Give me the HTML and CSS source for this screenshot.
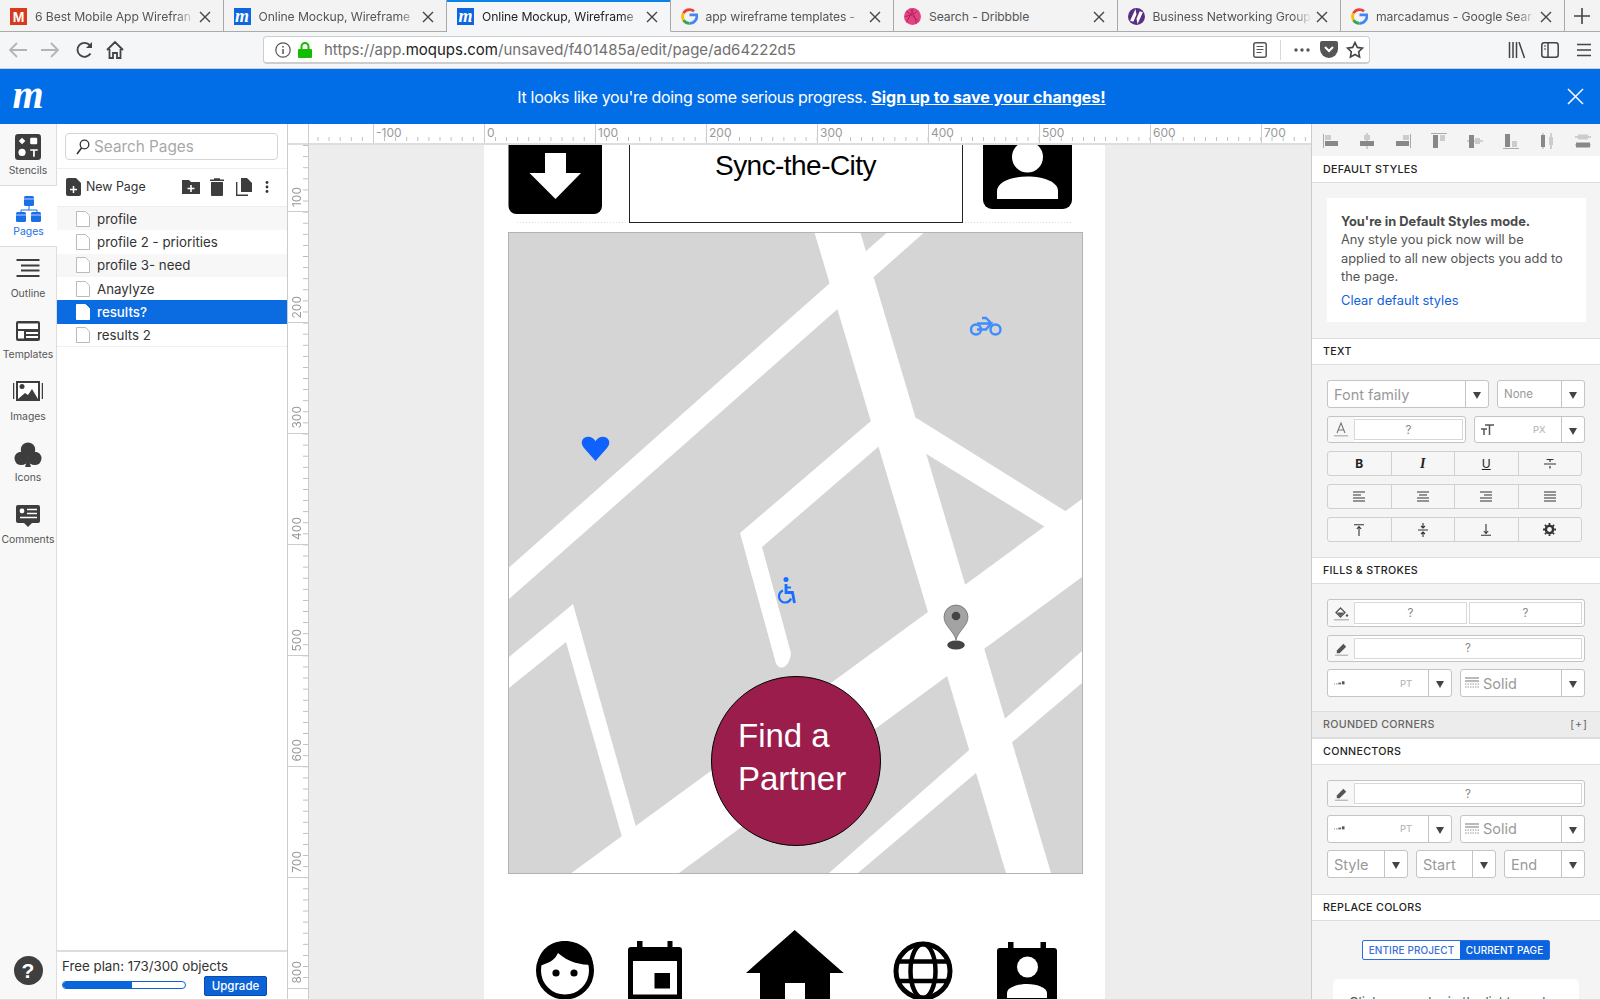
FILE: index.html
```html
<!DOCTYPE html>
<html lang="en">
<head>
<meta charset="utf-8">
<title>Moqups</title>
<link rel="stylesheet" href="styles.css">
</head>
<body>
<svg class="defs" width="0" height="0" aria-hidden="true">
  <symbol id="x" viewBox="0 0 12 12"><path d="M1 1l10 10M11 1L1 11" stroke="#444" stroke-width="1.4" fill="none"/></symbol>
  <symbol id="g" viewBox="0 0 16 16"><path d="M8 6.5h7c.4 3.9-2.2 8-7 8" fill="none" stroke="#4285f4" stroke-width="2.6"/><path d="M8 14.5c-2.6 0-4.6-1.3-5.7-3.2" fill="none" stroke="#34a853" stroke-width="2.6"/><path d="M2.3 11.3C1.300 9.400 1.300 6.800 2.300 4.900" fill="none" stroke="#fbbc05" stroke-width="2.600"/><path d="M2.300 4.900C3.400 2.900 5.500 1.500 8 1.500c1.700 0 3.100.6 4.300 1.600" fill="none" stroke="#ea4335" stroke-width="2.600"/></symbol>
  <symbol id="pencil" viewBox="0 0 16 16"><path d="M3 10l7-7 3 3-7 7H3z" fill="#555"/><rect x="1" y="14.500" width="14" height="1.500" fill="#bbb"/></symbol>
  <symbol id="weight" viewBox="0 0 16 8"><rect x="0" y="4" width="1" height="1" fill="#666"/><rect x="2.500" y="4" width="1.500" height="1" fill="#666"/><rect x="5" y="3" width="3" height="2" fill="#666"/><rect x="9" y="1.500" width="3" height="3.500" fill="#555"/></symbol>
  <symbol id="lines" viewBox="0 0 14 12"><path d="M0 1h14M0 4h14" stroke="#777" stroke-width="1.200"/><path d="M0 7h14M0 10h14" stroke="#999" stroke-width="1" stroke-dasharray="1.500 1"/></symbol>
  <symbol id="file" viewBox="0 0 14 16"><path d="M.5.500h9l4 4v11H.5z" fill="#fff" stroke="#bbb"/></symbol>
</svg>

<div class="app">
  <div class="tabs">
    <div class="tab"><span class="fav fav-gm">M</span><span class="tab-title">6 Best Mobile App Wirefran</span><svg class="tab-x"><use href="#x"/></svg></div>
    <div class="tab"><span class="fav fav-mq">m</span><span class="tab-title">Online Mockup, Wireframe</span><svg class="tab-x"><use href="#x"/></svg></div>
    <div class="tab tab-active"><span class="fav fav-mq">m</span><span class="tab-title">Online Mockup, Wireframe</span><svg class="tab-x"><use href="#x"/></svg></div>
    <div class="tab"><svg class="fav"><use href="#g"/></svg><span class="tab-title">app wireframe templates -</span><svg class="tab-x"><use href="#x"/></svg></div>
    <div class="tab"><svg class="fav" viewBox="0 0 16 16"><circle cx="8" cy="8" r="8" fill="#e3447f"/><path d="M2 3c4 3 9 6 12 10M9 .5C7 5 4 10 2.500 13.500M1 8c5-1 10-3 12-5.500M6 .5c3 4 5 10 5.500 14.500" stroke="#a82358" stroke-width=".8" fill="none"/></svg><span class="tab-title tab-title-full">Search - Dribbble</span><svg class="tab-x"><use href="#x"/></svg></div>
    <div class="tab"><svg class="fav" viewBox="0 0 16 16"><circle cx="8" cy="8" r="8" fill="#5c2d84"/><path d="M7 1L2 12l3 1 3-7zM9 15l5-11-3-1-3 7z" fill="#fff"/></svg><span class="tab-title">Business Networking Group</span><svg class="tab-x"><use href="#x"/></svg></div>
    <div class="tab"><svg class="fav"><use href="#g"/></svg><span class="tab-title">marcadamus - Google Sear</span><svg class="tab-x"><use href="#x"/></svg></div>
    <div class="tab-plus"><svg width="16" height="16" viewBox="0 0 16 16"><path d="M8 0v16M0 8h16" stroke="#444" stroke-width="1.600"/></svg></div>
  </div>

  <div class="toolbar">
    <svg class="tb tb-back" width="20" height="18" viewBox="0 0 20 18"><path d="M19 9H2M9 2L2 9l7 7" fill="none" stroke="#b4b4b4" stroke-width="1.800"/></svg>
    <svg class="tb tb-fwd" width="20" height="18" viewBox="0 0 20 18"><path d="M1 9h17M11 2l7 7-7 7" fill="none" stroke="#b4b4b4" stroke-width="1.800"/></svg>
    <svg class="tb tb-reload" width="18" height="18" viewBox="0 0 18 18"><path d="M14.500 12.500A7 7 0 1 1 14 4.500" fill="none" stroke="#444" stroke-width="1.900"/><path d="M16 1v6h-6z" fill="#444"/></svg>
    <svg class="tb tb-home" width="18" height="18" viewBox="0 0 18 18"><path d="M1 9l8-8 8 8M3.500 8v9h3.500v-5h4v5h3.500V8" fill="none" stroke="#444" stroke-width="1.800"/></svg>
    <div class="url">
      <svg width="16" height="16" viewBox="0 0 16 16"><circle cx="8" cy="8" r="7.200" fill="none" stroke="#555" stroke-width="1.200"/><rect x="7.300" y="7" width="1.500" height="5" fill="#555"/><rect x="7.300" y="4" width="1.500" height="1.600" fill="#555"/></svg>
      <svg class="url-lock" width="14" height="16" viewBox="0 0 14 16"><path d="M3.500 7V4.500a3.500 3.500 0 0 1 7 0V7" fill="none" stroke="#12bc00" stroke-width="2"/><rect y="7" width="14" height="9" rx="1" fill="#12bc00"/></svg>
      <span class="url-text">https://app.<b>moqups.com</b>/unsaved/f401485a/edit/page/ad64222d5</span>
      <svg class="url-reader" width="14" height="16" viewBox="0 0 14 16"><rect x=".8" y=".8" width="12.400" height="14.400" rx="2" fill="none" stroke="#555" stroke-width="1.500"/><path d="M3.500 4.500h7M3.500 7.500h7M3.500 10.500h5" stroke="#555" stroke-width="1.200"/></svg>
      <span class="url-sep"></span>
      <svg width="16" height="4" viewBox="0 0 16 4"><circle cx="2" cy="2" r="1.700" fill="#555"/><circle cx="8" cy="2" r="1.700" fill="#555"/><circle cx="14" cy="2" r="1.700" fill="#555"/></svg>
      <svg class="url-pocket" width="18" height="17" viewBox="0 0 18 17"><path d="M2 0h14a2 2 0 0 1 2 2v6a9 9 0 0 1-18 0V2a2 2 0 0 1 2-2z" fill="#555"/><path d="M5 6l4 4 4-4" fill="none" stroke="#fff" stroke-width="2"/></svg>
      <svg class="url-star" width="18" height="18" viewBox="0 0 18 18"><path d="M9 1.500l2.300 4.900 5.200.7-3.800 3.700.9 5.300L9 13.500l-4.600 2.600.9-5.300L1.500 7.100l5.200-.7z" fill="none" stroke="#444" stroke-width="1.600"/></svg>
    </div>
    <svg class="tb tb-lib" width="18" height="16" viewBox="0 0 18 16"><path d="M1.500 0v16M5 0v16M8.500 0v16M11 0l5.500 16" stroke="#444" stroke-width="1.500" fill="none"/></svg>
    <svg class="tb tb-side" width="18" height="16" viewBox="0 0 18 16"><rect x=".8" y=".8" width="16.400" height="14.400" rx="2.500" fill="none" stroke="#444" stroke-width="1.500"/><path d="M7 1v14" stroke="#444" stroke-width="1.500"/><path d="M3 4h2M3 7h2" stroke="#444"/></svg>
    <svg class="tb tb-menu" width="14" height="14" viewBox="0 0 14 14"><path d="M0 1.500h14M0 7h14M0 12.500h14" stroke="#444" stroke-width="1.700"/></svg>
  </div>

  <div class="banner">
    <span class="banner-logo">m</span>
    <p class="banner-msg"><span class="banner-lead">It looks like you're doing some serious progress.</span> <a class="banner-link">Sign up to save your changes!</a></p>
    <svg class="banner-x" width="17" height="17" viewBox="0 0 17 17"><path d="M1 1l15 15M16 1L1 16" stroke="#fff" stroke-width="1.500"/></svg>
  </div>

  <div class="main">
    <nav class="rail">
      <div class="rail-item rail-first">
        <svg width="26" height="26" viewBox="0 0 24 24"><rect width="24" height="24" rx="3" fill="#3d3d3d"/><path d="M6.500 3.500l3 3-3 3-3-3z" fill="#fff"/><rect x="14" y="3.500" width="6.500" height="6" rx="1" fill="#fff"/><circle cx="6.500" cy="17" r="3.300" fill="#fff"/><path d="M14 14h7v1.500h-2.700V21h-1.600v-5.500H14z" fill="#fff"/></svg>
        <span>Stencils</span>
      </div>
      <div class="rail-item rail-active">
        <svg width="26" height="26" viewBox="0 0 26 26"><path d="M13 9v5M5 18v-4h16v4" fill="none" stroke="#1a6fe8"/><rect x="8" y="0" width="10" height="10" rx="1.500" fill="#1a6fe8"/><rect x="0" y="16" width="10" height="10" rx="1.500" fill="#1a6fe8"/><rect x="15" y="16" width="10" height="10" rx="1.500" fill="#1a6fe8"/><path d="M8 3h10M0 19h10M15 19h10" stroke="#fff" stroke-width=".7"/></svg>
        <span>Pages</span>
      </div>
      <div class="rail-item">
        <svg width="26" height="26" viewBox="0 0 26 26"><path d="M1.500 3h23M6 8.500h18.500M6 13.500h18.500M1.500 19h23" stroke="#3d3d3d" stroke-width="2"/></svg>
        <span>Outline</span>
      </div>
      <div class="rail-item">
        <svg width="26" height="26" viewBox="0 0 26 26"><rect x="1" y="2" width="24" height="20" rx="2" fill="#3d3d3d"/><rect x="3" y="4.500" width="20" height="5.500" fill="#fff"/><rect x="3" y="12" width="6" height="7.500" fill="#fff"/><path d="M11 14h12M11 18h12" stroke="#fff" stroke-width="2"/></svg>
        <span>Templates</span>
      </div>
      <div class="rail-item">
        <svg width="30" height="26" viewBox="0 0 30 26"><rect x="3" y="1" width="24" height="20" fill="#3d3d3d"/><path d="M.5 3v16M29.500 3v16" stroke="#3d3d3d" stroke-width="1.500"/><rect x="5" y="3" width="20" height="16" fill="#fff"/><circle cx="9" cy="6.500" r="2.500" fill="#3d3d3d"/><path d="M5 19l7-6 3 2 4-6 6 10z" fill="#3d3d3d"/></svg>
        <span>Images</span>
      </div>
      <div class="rail-item">
        <svg width="28" height="26" viewBox="0 0 28 27"><circle cx="14" cy="8" r="7.500" fill="#3d3d3d"/><circle cx="7" cy="17" r="7" fill="#3d3d3d"/><circle cx="21" cy="17" r="7" fill="#3d3d3d"/><path d="M14 14l3 12h4H7h4z" fill="#3d3d3d"/></svg>
        <span>Icons</span>
      </div>
      <div class="rail-item">
        <svg width="26" height="26" viewBox="0 0 26 26"><path d="M3 1h20a2 2 0 0 1 2 2v14a2 2 0 0 1-2 2h-6l-4 4-4-4H3a2 2 0 0 1-2-2V3a2 2 0 0 1 2-2z" fill="#3d3d3d"/><circle cx="7" cy="7" r="2.400" fill="#fff"/><path d="M12 5.500h10M12 9.500h10M5 13.500h17" stroke="#fff" stroke-width="1.500"/></svg>
        <span>Comments</span>
      </div>
      <div class="rail-help">?</div>
    </nav>

    <aside class="pages">
      <div class="pages-search">
        <div class="search-box">
          <svg width="14" height="16" viewBox="0 0 14 16"><circle cx="8.500" cy="5.500" r="4.300" fill="none" stroke="#333" stroke-width="1.300"/><path d="M5.500 9L1 15" stroke="#333" stroke-width="1.500"/></svg>
          <span>Search Pages</span>
        </div>
      </div>
      <div class="pages-actions">
        <svg width="15" height="18" viewBox="0 0 15 18"><path d="M2 0h8l5 5v11a2 2 0 0 1-2 2H2a2 2 0 0 1-2-2V2a2 2 0 0 1 2-2z" fill="#3d3d3d"/><path d="M7.500 8v7M4 11.500h7" stroke="#fff" stroke-width="1.500"/></svg>
        <span class="new-page">New Page</span>
        <svg class="act-folder" width="18" height="15" viewBox="0 0 18 15"><path d="M0 1h7l2 2h9v12H0z" fill="#3d3d3d"/><path d="M9 6v7M5.500 9.500h7" stroke="#fff" stroke-width="1.600"/></svg>
        <svg class="act-trash" width="14" height="18" viewBox="0 0 14 18"><path d="M1 4h12v13a1 1 0 0 1-1 1H2a1 1 0 0 1-1-1zM0 1.500h14V3H0zM4 .3h6v1.500H4z" fill="#3d3d3d"/></svg>
        <svg class="act-copy" width="16" height="18" viewBox="0 0 16 18"><path d="M5 0h6l5 5v9H5z" fill="#3d3d3d"/><path d="M.7 4v13.300H12" fill="none" stroke="#3d3d3d" stroke-width="1.400"/></svg>
        <svg class="act-more" width="4" height="12" viewBox="0 0 4 12"><circle cx="2" cy="1.500" r="1.400" fill="#333"/><circle cx="2" cy="6" r="1.400" fill="#333"/><circle cx="2" cy="10.500" r="1.400" fill="#333"/></svg>
      </div>
      <ul class="page-list">
        <li class="page-row page-alt"><svg width="14" height="16"><use href="#file"/></svg>profile</li>
        <li class="page-row"><svg width="14" height="16"><use href="#file"/></svg>profile 2 - priorities</li>
        <li class="page-row page-alt"><svg width="14" height="16"><use href="#file"/></svg>profile 3- need</li>
        <li class="page-row"><svg width="14" height="16"><use href="#file"/></svg>Anaylyze</li>
        <li class="page-row page-sel"><svg width="14" height="16"><use href="#file"/></svg>results?</li>
        <li class="page-row page-last"><svg width="14" height="16"><use href="#file"/></svg>results 2</li>
      </ul>
      <div class="pages-foot">
        <div class="plan">Free plan: 173/300 objects</div>
        <div class="plan-row">
          <div class="plan-bar"><div class="plan-fill"></div></div>
          <button class="upgrade">Upgrade</button>
        </div>
      </div>
    </aside>

    <section class="work">
      <div class="ruler-corner"></div>
      <div class="ruler-h">
        <span class="rh-first"></span>
        <span class="rh">-100</span><span class="rh">0</span><span class="rh">100</span><span class="rh">200</span><span class="rh">300</span><span class="rh">400</span><span class="rh">500</span><span class="rh">600</span><span class="rh">700</span>
      </div>
      <div class="ruler-v">
        <div class="rv rv-first"><span>100</span></div>
        <div class="rv"><span>200</span></div>
        <div class="rv"><span>300</span></div>
        <div class="rv"><span>400</span></div>
        <div class="rv"><span>500</span></div>
        <div class="rv"><span>600</span></div>
        <div class="rv"><span>700</span></div>
        <div class="rv rv-last"><span>800</span></div>
      </div>
      <div class="canvas">
        <div class="sheet">
          <svg class="art" width="621" height="854" viewBox="484 145 621 854">
            <!-- header icons -->
            <path d="M508.500 140H602V206a8 8 0 0 1-8 8H516.500a8 8 0 0 1-8-8z"/>
            <path d="M545 153h21v20h15l-25.500 26L529.500 173H545z" fill="#fff"/>
            <path d="M983 140h89V200a9 9 0 0 1-9 9H992a9 9 0 0 1-9-9z"/>
            <circle cx="1027.500" cy="157" r="15.500" fill="#fff"/>
            <path d="M997 199v-8c0-9 14-14.500 30.500-14.500S1058 182 1058 191v8z" fill="#fff"/>
            <path d="M517 222.500H628M962 222.500h110" stroke="#ddd" stroke-dasharray="1 2"/>
            <!-- map -->
            <rect x="508.500" y="232.500" width="574" height="641" fill="#d5d5d5" stroke="#b3b3b3"/>
            <g fill="#fff">
              <path d="M814.600 233h45.900L1051 873h-45z"/>
              <path d="M509 567.500L886.500 233h37.100L509 599z"/>
              <path d="M885 409L740 533l35 127c2 11 14 11 16 -7L762 547l130-112z"/>
              <path d="M910 414l160 100-20 16-130-80z"/>
              <path d="M571.500 873L1082 499v78L679 873z"/>
              <path d="M509 657l64-53 63 223-14 10-56-195-57 46z"/>
              <path d="M829 873l253-222v32L858 873z"/>
            </g>
            <!-- markers -->
            <path d="M595.500 461l-11.500-13c-5-6-1-11.300 4-11.300 3.500 0 6 2 7.500 4.500 1.500-2.500 4-4.500 7.500-4.500 5 0 9 5.300 4 11.300z" fill="#0f62fe"/>
            <g fill="none" stroke="#3f8cff" stroke-width="2.400"><circle cx="976" cy="329.500" r="5"/><circle cx="995.500" cy="329.500" r="5"/><path d="M977 329.500h9l5-6H977M991 323l-5-5h-4"/></g>
            <g fill="none" stroke="#1a6eff"><path d="M786 584v8.500h6.500l2 10.500" stroke-width="2.800"/><path d="M786 587.500h5" stroke-width="2"/><path d="M783 590.500a6.200 6.200 0 1 0 8 8" stroke-width="2.200"/></g>
            <circle cx="786" cy="579.500" r="2.500" fill="#1a6eff"/>
            <path d="M956 640c-2-9-12-14-12-23a12 12 0 0 1 24 0c0 9-10 14-12 23z" fill="#a3a3a3" stroke="#666" stroke-width=".7"/>
            <circle cx="956" cy="616" r="4.300" fill="#444"/>
            <ellipse cx="956" cy="645" rx="8.800" ry="4.500" fill="#444"/>
            <!-- bottom icons -->
            <circle cx="565" cy="970.500" r="26.500" fill="#fff" stroke="#000" stroke-width="5"/>
            <path d="M538 966c0-15 12-25 27-25 14 0 28 9 28 24-13 0-25-3-35-12-3 7-10 11-20 13z"/>
            <circle cx="556" cy="973" r="3.600"/><circle cx="574" cy="973" r="3.600"/>
            <path d="M637 941h5.500v6h25v-6h5v6h6.500a3 3 0 0 1 3 3v50h-54v-50a3 3 0 0 1 3-3h6z"/>
            <rect x="633" y="961" width="44" height="33.500" fill="#fff"/>
            <rect x="654.500" y="973" width="15.500" height="15.500"/>
            <path d="M794.700 930l49 43H830v27h-25v-17h-20v17h-25v-27h-14z"/>
            <g fill="none" stroke="#000"><circle cx="923" cy="971" r="27" stroke-width="5"/><ellipse cx="923" cy="971" rx="12.500" ry="27" stroke-width="4.500"/><path d="M898 961.500h50M898 981h50" stroke-width="4.500"/></g>
            <path d="M1008 942h5.500v6h27v-6h5.500v6h8a3 3 0 0 1 3 3v49h-60v-49a3 3 0 0 1 3-3h8z"/>
            <circle cx="1027.500" cy="967" r="10.500" fill="#fff"/>
            <path d="M1007 998v-5c0-5 9-9 20-9s20 4 20 9v5z" fill="#fff"/>
          </svg>
          <div class="title-box">Sync-the-City</div>
          <div class="find-btn">Find a<br>Partner</div>
        </div>
      </div>
    </section>

    <aside class="props">
      <div class="align-row">
        <svg width="16" height="16" viewBox="0 0 16 16"><path d="M.5 1v14" stroke="#aaa"/><rect x="2" y="2" width="6" height="5" fill="#ccc"/><rect x="2" y="8" width="13" height="5" fill="#888"/></svg>
        <svg width="16" height="16" viewBox="0 0 16 16"><path d="M8 0v16" stroke="#aaa"/><rect x="5" y="2" width="6" height="5" fill="#ccc"/><rect x="1" y="8" width="14" height="5" fill="#888"/></svg>
        <svg width="16" height="16" viewBox="0 0 16 16"><path d="M15.500 1v14" stroke="#aaa"/><rect x="8" y="2" width="6" height="5" fill="#ccc"/><rect x="1" y="8" width="13" height="5" fill="#888"/></svg>
        <svg width="16" height="16" viewBox="0 0 16 16"><path d="M0 .5h16" stroke="#aaa"/><rect x="2" y="2" width="5" height="13" fill="#888"/><rect x="9" y="2" width="5" height="6" fill="#ccc"/></svg>
        <svg width="16" height="16" viewBox="0 0 16 16"><path d="M0 8h16" stroke="#aaa"/><rect x="2" y="2" width="5" height="13" fill="#888"/><rect x="8" y="5" width="5" height="6" fill="#ccc"/></svg>
        <svg width="16" height="16" viewBox="0 0 16 16"><path d="M0 15.500h16" stroke="#aaa"/><rect x="2" y="1" width="5" height="13" fill="#888"/><rect x="9" y="8" width="5" height="6" fill="#ccc"/></svg>
        <svg width="16" height="16" viewBox="0 0 16 16"><path d="M4 0v16M12 0v16" stroke="#aaa"/><rect x="2" y="2" width="4" height="12" fill="#888"/><rect x="10" y="4" width="4" height="8" fill="#ccc"/></svg>
        <svg width="16" height="16" viewBox="0 0 16 16"><path d="M0 4h16M0 12h16" stroke="#aaa"/><rect x="3" y="1.500" width="10" height="5" fill="#ccc"/><rect x="1" y="9.500" width="14" height="5" fill="#888"/></svg>
      </div>

      <h3 class="ph ph-first">Default Styles</h3>
      <div class="pbody pbody-default">
        <div class="note">
          <strong>You're in Default Styles mode.</strong><br>
          Any style you pick now will be applied to all new objects you add to the page.
          <a class="note-link">Clear default styles</a>
        </div>
      </div>

      <h3 class="ph">Text</h3>
      <div class="pbody pbody-text">
        <div class="frow h28">
          <div class="field w162"><span class="fval fval-big">Font family</span><span class="caret"></span></div>
          <div class="field w88"><span class="fval fval-sm">None</span><span class="caret"></span></div>
        </div>
        <div class="frow h27">
          <div class="field w139"><span class="ficon"><svg width="14" height="15" viewBox="0 0 14 15"><path d="M3 11L7 1l4 10M4.500 8h5" fill="none" stroke="#777" stroke-width="1.100"/><rect y="13" width="14" height="1.500" fill="#bbb"/></svg></span><span class="input">?</span></div>
          <div class="field w111"><span class="ficon ficon-bare"><svg width="13" height="11" viewBox="0 0 13 11"><path d="M4 1h9M8.500 1v10M0 5h6M3 5v6" stroke="#555" stroke-width="1.500"/></svg></span><span class="unit">PX</span><span class="caret"></span></div>
        </div>
        <div class="btn-group h25">
          <span class="b-b">B</span>
          <span class="b-i">I</span>
          <span class="b-u">U</span>
          <span><svg width="12" height="12" viewBox="0 0 12 12"><path d="M0 6h12M2.500 1.500h7M6 1.500v2.500M6 8v2.500" stroke="#333" stroke-width="1.200"/></svg></span>
        </div>
        <div class="btn-group h25">
          <span><svg width="12" height="12" viewBox="0 0 12 12"><path d="M0 1h12M0 4h8M0 7h12M0 10h12" stroke="#333"/></svg></span>
          <span><svg width="12" height="12" viewBox="0 0 12 12"><path d="M0 1h12M2 4h8M0 7h12M0 10h12" stroke="#333"/></svg></span>
          <span><svg width="12" height="12" viewBox="0 0 12 12"><path d="M0 1h12M4 4h8M0 7h12M0 10h12" stroke="#333"/></svg></span>
          <span><svg width="12" height="12" viewBox="0 0 12 12"><path d="M0 1h12M0 4h12M0 7h12M0 10h12" stroke="#333"/></svg></span>
        </div>
        <div class="btn-group h25">
          <span><svg width="12" height="12" viewBox="0 0 12 12"><path d="M1 .7h10M6 12V3M3.800 5L6 2.500 8.200 5" fill="none" stroke="#333" stroke-width="1.100"/></svg></span>
          <span><svg width="12" height="14" viewBox="0 0 12 14"><path d="M1 7h10M6 0v4.500M6 9.500V14M4 3l2 2 2-2M4 11l2-2 2 2" fill="none" stroke="#333" stroke-width="1.100"/></svg></span>
          <span><svg width="12" height="12" viewBox="0 0 12 12"><path d="M1 11.300h10M6 0v9M3.800 7L6 9.500 8.200 7" fill="none" stroke="#333" stroke-width="1.100"/></svg></span>
          <span><svg width="13" height="13" viewBox="0 0 13 13"><circle cx="6.500" cy="6.500" r="3.600" fill="none" stroke="#333" stroke-width="2.400"/><path d="M6.500 0v13M0 6.500h13M1.900 1.900l9.200 9.200M11.100 1.900l-9.200 9.200" stroke="#333" stroke-width="1.800" stroke-dasharray="2 9.200"/></svg></span>
        </div>
      </div>

      <h3 class="ph">Fills &amp; Strokes</h3>
      <div class="pbody pbody-fills">
        <div class="field h28">
          <span class="ficon"><svg width="15" height="15" viewBox="0 0 15 15"><path d="M6.500 2L2 6.500l4.500 4.500L11 6.500z" fill="#fff" stroke="#555" stroke-width="1.300"/><path d="M3 6.500h7l-3.500 3.500z" fill="#555"/><circle cx="13" cy="9.500" r="1.200" fill="#555"/><rect y="13" width="15" height="1.500" fill="#bbb"/></svg></span>
          <span class="input">?</span><span class="input input-2">?</span>
        </div>
        <div class="field h27">
          <span class="ficon"><svg width="15" height="15"><use href="#pencil"/></svg></span>
          <span class="input">?</span>
        </div>
        <div class="frow h28">
          <div class="field w125"><span class="ficon ficon-bare"><svg width="14" height="7"><use href="#weight"/></svg></span><span class="unit">PT</span><span class="caret"></span></div>
          <div class="field w125"><span class="ficon ficon-bare ficon-lines"><svg width="14" height="12"><use href="#lines"/></svg></span><span class="fval fval-big fval-solid">Solid</span><span class="caret"></span></div>
        </div>
      </div>

      <h3 class="ph ph-muted">Rounded Corners<span class="ph-plus">[+]</span></h3>
      <h3 class="ph">Connectors</h3>
      <div class="pbody pbody-conn">
        <div class="field h27">
          <span class="ficon"><svg width="15" height="15"><use href="#pencil"/></svg></span>
          <span class="input">?</span>
        </div>
        <div class="frow h28">
          <div class="field w125"><span class="ficon ficon-bare"><svg width="14" height="7"><use href="#weight"/></svg></span><span class="unit">PT</span><span class="caret"></span></div>
          <div class="field w125"><span class="ficon ficon-bare ficon-lines"><svg width="14" height="12"><use href="#lines"/></svg></span><span class="fval fval-big fval-solid">Solid</span><span class="caret"></span></div>
        </div>
        <div class="frow frow-3 h28">
          <div class="field w81"><span class="fval fval-big">Style</span><span class="caret"></span></div>
          <div class="field w80"><span class="fval fval-big">Start</span><span class="caret"></span></div>
          <div class="field w81"><span class="fval fval-big">End</span><span class="caret"></span></div>
        </div>
      </div>

      <h3 class="ph">Replace Colors</h3>
      <div class="pbody pbody-replace">
        <div class="toggle"><span class="tg">ENTIRE PROJECT</span><span class="tg tg-on">CURRENT PAGE</span></div>
        <div class="replace-card">Click on a color in the list to replace</div>
      </div>
    </aside>
  </div>
</div>
</body>
</html>
```

FILE: styles.css
```css
* { box-sizing: border-box; }
html, body { margin: 0; padding: 0; height: 100%; }
body { background: #dcdcdc; overflow: hidden; font-family: Inter, "Liberation Sans", sans-serif; color: #333; }
.defs { display: block; height: 0; }
.app { width: 1600px; height: 999px; display: flex; flex-direction: column; overflow: hidden; }

/* browser tabs */
.tabs { height: 32px; flex: none; display: flex; background: #f3f3f4; border-bottom: 1px solid #aaa; }
.tab { width: 223.5px; flex: none; display: flex; align-items: center; padding: 2px 12px 0 10px; border-right: 1px solid #a8a8a8; font-size: 12.2px; letter-spacing: -.1px; color: #555; position: relative; }
.tab-active { background: #f5f6f7; color: #222; border-bottom: 1px solid #f5f6f7; margin-bottom: -1px; box-shadow: inset 0 2px 0 #0a84e8; }
.fav { width: 17px; height: 17px; flex: none; display: flex; align-items: center; justify-content: center; margin-right: 8px; }
.fav-gm { background: #d93a1e; color: #fff; font: bold 14px "Liberation Sans", sans-serif; }
.fav-mq { background: #0b66df; color: #fff; font: italic bold 18px/15px "Liberation Serif", serif; }
.tab-title { flex: 1; min-width: 0; white-space: nowrap; -webkit-mask-image: linear-gradient(to right, #000 88%, transparent); mask-image: linear-gradient(to right, #000 88%, transparent); }
.tab-title-full { -webkit-mask-image: none; mask-image: none; }
.tab-x { width: 12px; height: 12px; flex: none; margin-left: 4px; }
.tab-plus { flex: 1; display: flex; align-items: center; justify-content: center; }

/* browser toolbar */
.toolbar { height: 37px; flex: none; display: flex; align-items: center; background: #f5f6f7; border-bottom: 1px solid #cfcfcf; padding-left: 8px; }
.tb { flex: none; display: block; }
.tb-fwd { margin-left: 12px; }
.tb-reload { margin-left: 16px; }
.tb-home { margin-left: 12px; }
.url { width: 1107px; height: 28px; flex: none; margin-left: 139px; background: #fff; border: 1px solid #cdcdcd; border-bottom-width: 2px; border-radius: 4px; display: flex; align-items: center; padding: 0 5px 0 11px; }
.url-lock { margin-left: 7px; }
.url-text { flex: 1; margin-left: 12px; font-size: 15px; color: #707070; white-space: nowrap; }
.url-text b { font-weight: 400; color: #222; }
.url-reader { margin-right: 13px; }
.url-sep { width: 1px; height: 20px; background: #d8d8d8; margin-right: 13px; }
.url-pocket { margin-left: 10px; }
.url-star { margin-left: 8px; }
.tb-lib { margin-left: 138px; }
.tb-side { margin-left: 15px; }
.tb-menu { margin-left: 18px; }

/* banner */
.banner { height: 55px; flex: none; display: flex; align-items: center; background: #016de6; color: #fff; }
.banner-logo { width: 56px; flex: none; text-align: center; font: italic bold 40px/40px "Liberation Serif", serif; margin-top: -4px; }
.banner-msg { flex: 1; margin: 0; padding-left: 10px; text-align: center; font-size: 16px; }
.banner-lead { letter-spacing: -.33px; }
.banner-link { font-weight: 700; text-decoration: underline; }
.banner-x { margin-right: 16px; margin-left: 10px; }

/* main area */
.main { flex: 1; min-height: 0; display: flex; }

/* left rail */
.rail { width: 57px; flex: none; background: #f8f8f8; border-right: 1px solid #ddd; display: flex; flex-direction: column; }
.rail-item { height: 61.6px; flex: none; display: flex; flex-direction: column; align-items: center; padding-top: 10px; font-size: 10.4px; color: #555; }
.rail-item svg { height: 26px; flex: none; }
.rail-item span { line-height: 14px; margin-top: 3.5px; white-space: nowrap; }
.rail-first { border-bottom: 1px solid #ddd; }
.rail-active { background: #fff; color: #1a6fe8; margin-right: -1px; border-bottom: 1px solid #ddd; position: relative; }
.rail-help { width: 29px; height: 29px; margin: auto 0 14px 13.500px; border-radius: 50%; background: #3f3f3f; color: #fff; font: bold 21px/29px "Liberation Sans", sans-serif; text-align: center; }

/* pages panel */
.pages { width: 231px; flex: none; background: #fff; border-right: 1px solid #ccc; display: flex; flex-direction: column; }
.pages-search { height: 45px; flex: none; padding: 9px 9px 0 8px; border-bottom: 1px solid #eee; }
.search-box { height: 27px; border: 1px solid #d4d4d4; border-radius: 4px; display: flex; align-items: center; padding-left: 10px; font-size: 15.3px; color: #a8a8a8; gap: 4px; }
.pages-actions { height: 38px; flex: none; display: flex; align-items: center; padding: 0 0 2px 9px; border-bottom: 1px solid #eee; }
.new-page { font-size: 12.4px; color: #333; margin-left: 5px; flex: 1; }
.act-folder { margin-right: 10px; }
.act-trash { margin-right: 12px; }
.act-copy { margin-right: 13px; }
.act-more { margin-right: 18px; }
.page-list { list-style: none; margin: 0; padding: 0; }
.page-row { height: 23.33px; display: flex; align-items: center; padding-left: 19px; gap: 7px; font-size: 13.3px; color: #333; }
.page-alt { background: #f7f7f7; }
.page-sel { background: #0b6be0; color: #fff; font-weight: 500; }
.page-sel svg { filter: brightness(3); }
.page-last { border-bottom: 1px solid #f0f0f0; }
.pages-foot { margin-top: auto; height: 49px; flex: none; border-top: 2px solid #ddd; padding: 6px 5px 0 5px; }
.plan { font-size: 13.3px; line-height: 17px; color: #333; }
.plan-row { display: flex; align-items: flex-start; margin-top: 1px; }
.plan-bar { width: 124px; height: 8px; margin-top: 5px; border: 1px solid #0a62d0; border-radius: 4px; overflow: hidden; background: #fff; }
.plan-fill { width: 56.500%; height: 100%; background: #0a66dc; }
.upgrade { width: 63px; height: 20px; margin: 0 0 0 18px; padding: 0; border: 1px solid #0a4cab; border-radius: 2px; background: #0b63d6; color: #fff; font: 500 11.500px Inter, sans-serif; }

/* workspace */
.work { flex: 1; min-width: 0; display: grid; grid-template-columns: 21px 1fr; grid-template-rows: 21px 1fr; border-right: 1px solid #ccc; }
.ruler-corner { background: #fff; border-right: 1px solid #ccc; border-bottom: 2px solid #ddd; }
.ruler-h { display: flex; overflow: hidden; background-color: #fff; background-image: linear-gradient(to right, #bbb 1px, transparent 1px); background-size: 11.100px 4px; background-position: 8.500px calc(100% - 2px); background-repeat: repeat-x; border-bottom: 2px solid #ddd; font-size: 12px; color: #999; }
.rh-first { width: 64px; flex: none; }
.rh { width: 111px; flex: none; padding: 1px 0 0 2px; border-left: 1px solid #ccc; line-height: 16px; }
.ruler-v { overflow: hidden; background-color: #fff; background-image: linear-gradient(to bottom, #bbb 1px, transparent 1px); background-size: 5px 11.100px; background-position: right 0 top .100px; background-repeat: repeat-y; border-right: 1px solid #ccc; font-size: 12px; color: #999; }
.rv { height: 111px; border-bottom: 1px solid #ccc; display: flex; flex-direction: column; justify-content: flex-end; align-items: flex-start; padding: 0 0 4px 2px; }
.rv-first { height: 67px; }
.rv span { writing-mode: vertical-rl; transform: rotate(180deg); line-height: 14px; }
.canvas { overflow: hidden; background: #ededed; padding-left: 175px; min-height: 0; }
.sheet { width: 621px; height: 100%; background: #fff; position: relative; }
.art { position: absolute; left: 0; top: 0; display: block; }
.title-box { position: absolute; left: 144.500px; top: -10px; width: 334px; height: 88px; border: 1px solid #222; background: transparent; text-align: center; font: 28px/1 "Liberation Sans", sans-serif; letter-spacing: -.55px; color: #000; padding-top: 16px; }
.find-btn { position: absolute; left: 227px; top: 531px; width: 170px; height: 170px; border-radius: 50%; border: 1px solid #000; background: #9b1d4c; color: #fff; font: 33px/43px "Liberation Sans", sans-serif; padding: 37px 0 0 26px; }

/* right panel */
.props { width: 288px; flex: none; background: #f4f4f4; overflow: hidden; }
.align-row { height: 32px; display: flex; align-items: center; gap: 20px; padding: 2px 0 0 11px; }
.align-row svg { flex: none; }
.ph { margin: 0; height: 27px; display: flex; align-items: center; padding-left: 11px; background: #fff; border-top: 1px solid #ddd; border-bottom: 1px solid #ddd; font-size: 10.700px; font-weight: 500; letter-spacing: .3px; text-transform: uppercase; color: #222; }
.ph-first { border-top: 0; height: 27px; }
.ph-muted { background: #ececec; color: #666; justify-content: space-between; padding-right: 12px; height: 27px; }
.ph-plus { font-weight: 400; letter-spacing: 1px; }
.pbody { padding-left: 15px; padding-right: 15px; }
.pbody-default { padding-top: 15px; padding-bottom: 16px; }
.note { background: #fff; padding: 15px 18px 12px 14px; font-size: 12.850px; line-height: 18.300px; color: #555; width: 259px; }
.note strong { color: #4a4a4a; font-weight: 700; }
.note-link { display: block; margin-top: 6px; color: #1060e0; }
.pbody-text, .pbody-fills, .pbody-conn { padding-top: 15px; padding-bottom: 15px; display: flex; flex-direction: column; }
.pbody-text { gap: 8px; }
.pbody-fills, .pbody-conn { gap: 7.500px; }
.pbody-fills { padding-bottom: 14px; }
.pbody-conn { padding-bottom: 16px; }
.frow { display: flex; justify-content: space-between; width: 258px; }
.h28 { height: 28px; flex: none; }
.h27 { height: 27px; flex: none; }
.h25 { height: 25px; flex: none; }
.field { display: flex; align-items: stretch; background: #fff; border: 1px solid #c4c4c4; border-radius: 3px; width: 258px; }
.frow .field { flex: none; }
.frow .w162 { width: 162px; } .frow .w88 { width: 88px; } .frow .w139 { width: 139px; } .frow .w111 { width: 111px; }
.frow .w125 { width: 125px; } .frow .w81 { width: 81px; } .frow .w80 { width: 80px; }
.fval { flex: 1; min-width: 0; display: flex; align-items: center; color: #999; padding-left: 6px; }
.fval-big { font-size: 14.500px; }
.fval-sm { font-size: 11.500px; }
.fval-solid { padding-left: 0; }
.caret { width: 23px; flex: none; border-left: 1px solid #c4c4c4; display: flex; align-items: center; justify-content: center; }
.caret::before { content: ""; width: 0; height: 0; margin-top: 3px; border-left: 4px solid transparent; border-right: 4px solid transparent; border-top: 7px solid #444; }
.ficon { width: 26px; flex: none; display: flex; align-items: center; justify-content: center; background: #f7f7f7; border-radius: 3px 0 0 3px; }
.ficon-bare { background: transparent; flex: 1; justify-content: flex-start; padding-left: 6px; }
.ficon-lines { flex: none; width: 22px; padding-left: 4px; }
.input { flex: 1; margin: 2px 2px 2px 0; display: flex; align-items: center; justify-content: center; border: 1px solid #d8d8d8; font-size: 11.500px; color: #888; background: #fff; }
.input-2 { margin-left: 0; }
.unit { width: 28px; flex: none; display: flex; align-items: center; font-size: 9.500px; font-weight: 500; color: #bbb; }
.btn-group { display: flex; width: 255px; border: 1px solid #d0d0d0; border-radius: 3px; background: #f6f6f6; }
.btn-group span { flex: 1; display: flex; align-items: center; justify-content: center; border-left: 1px solid #d0d0d0; color: #222; font-size: 12px; }
.btn-group span:first-child { border-left: 0; }
.b-b { font-weight: 700; }
.btn-group .b-i { font: italic bold 14px "Liberation Serif", serif; }
.b-u { text-decoration: underline; }
.pbody-replace { padding-top: 19px; height: 90px; overflow: hidden; }
.toggle { width: 188px; height: 20px; margin-left: 35px; display: flex; border: 1px solid #2b6ee0; border-radius: 2px; background: #fff; font-size: 10px; font-weight: 500; }
.tg { width: 97px; flex: none; display: flex; align-items: center; justify-content: center; color: #3a6fd8; white-space: nowrap; letter-spacing: .1px; }
.tg-on { width: 90px; background: #0b63e0; color: #fff; flex: 1; }
.replace-card { width: 246px; height: 60px; margin: 19px 0 0 6px; background: #fff; border-radius: 5px; padding: 15px 16px; font-size: 13px; color: #555; white-space: nowrap; overflow: hidden; }
```
